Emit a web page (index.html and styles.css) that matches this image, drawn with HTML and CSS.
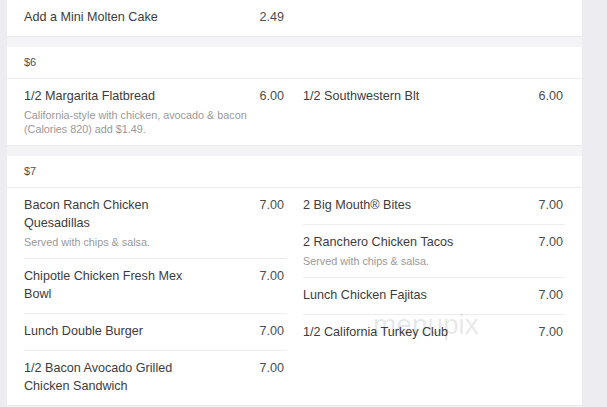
FILE: index.html
```html
<!DOCTYPE html>
<html>
<head>
<meta charset="utf-8">
<link rel="stylesheet" href="styles.css">
</head>
<body>
<div class="page">
  <div class="menu">
    <section class="card">
      <div class="cols">
        <div class="col">
          <div class="item">
            <div class="name">Add a Mini Molten Cake</div>
            <div class="price">2.49</div>
          </div>
        </div>
        <div class="col"></div>
      </div>
    </section>

    <section class="card">
      <div class="head">$6</div>
      <div class="cols">
        <div class="col">
          <div class="item">
            <div class="name">1/2 Margarita Flatbread</div>
            <div class="price">6.00</div>
            <div class="desc">California-style with chicken, avocado &amp; bacon (Calories 820) add $1.49.</div>
          </div>
        </div>
        <div class="col">
          <div class="item">
            <div class="name">1/2 Southwestern Blt</div>
            <div class="price">6.00</div>
          </div>
        </div>
      </div>
    </section>

    <section class="card">
      <div class="head">$7</div>
      <div class="cols">
        <div class="col">
          <div class="item">
            <div class="name">Bacon Ranch Chicken Quesadillas</div>
            <div class="price">7.00</div>
            <div class="desc">Served with chips &amp; salsa.</div>
          </div>
          <div class="item">
            <div class="name">Chipotle Chicken Fresh Mex Bowl</div>
            <div class="price">7.00</div>
          </div>
          <div class="item">
            <div class="name">Lunch Double Burger</div>
            <div class="price">7.00</div>
          </div>
          <div class="item">
            <div class="name">1/2 Bacon Avocado Grilled Chicken Sandwich</div>
            <div class="price">7.00</div>
          </div>
        </div>
        <div class="col">
          <div class="item">
            <div class="name">2 Big Mouth® Bites</div>
            <div class="price">7.00</div>
          </div>
          <div class="item">
            <div class="name">2 Ranchero Chicken Tacos</div>
            <div class="price">7.00</div>
            <div class="desc">Served with chips &amp; salsa.</div>
          </div>
          <div class="item">
            <div class="name">Lunch Chicken Fajitas</div>
            <div class="price">7.00</div>
          </div>
          <div class="item">
            <div class="name">1/2 California Turkey Club</div>
            <div class="price">7.00</div>
          </div>
        </div>
      </div>
    </section>
  </div>
  <div class="watermark">menupix</div>
</div>
</body>
</html>
```

FILE: styles.css
```css
html, body {
  margin: 0;
  padding: 0;
}
body {
  background: #ececf1;
  font-family: "Liberation Sans", Arial, sans-serif;
  width: 607px;
  height: 407px;
  overflow: hidden;
}
.page {
  position: relative;
  padding-left: 7px;
}
.menu {
  width: 575px;
  background: #f4f4f6;
  display: flex;
  flex-direction: column;
  gap: 11px;
  padding-bottom: 11px;
}
.card {
  background: #ffffff;
  box-shadow: 0 1px 1px rgba(0, 0, 0, 0.04);
}
.head {
  font-size: 11px;
  line-height: 14px;
  color: #505050;
  padding: 8px 17px 9px;
  border-bottom: 1px solid #ededed;
}
.cols {
  display: grid;
  grid-template-columns: 1fr 1fr;
  column-gap: 17px;
  padding: 0 17px;
}
.col {
  display: flex;
  flex-direction: column;
}
.item {
  display: grid;
  grid-template-columns: 181px 1fr;
  padding: 8px 0 10px;
  border-bottom: 1px solid #ededed;
}
.item:last-child {
  border-bottom: none;
}
.name {
  font-size: 12.6px;
  line-height: 18px;
  color: #3c3c3c;
}
.price {
  font-size: 12.6px;
  line-height: 18px;
  color: #4c4c4c;
  text-align: right;
  padding-right: 2px;
}
.desc {
  grid-column: 1 / 3;
  font-size: 10.8px;
  line-height: 14px;
  color: #999;
  margin-top: 3px;
  margin-bottom: -1px;
  padding-right: 10px;
}
.watermark {
  position: absolute;
  left: 373px;
  top: 311px;
  font-size: 28px;
  line-height: 28px;
  color: rgba(0, 0, 0, 0.1);
  pointer-events: none;
}
```
